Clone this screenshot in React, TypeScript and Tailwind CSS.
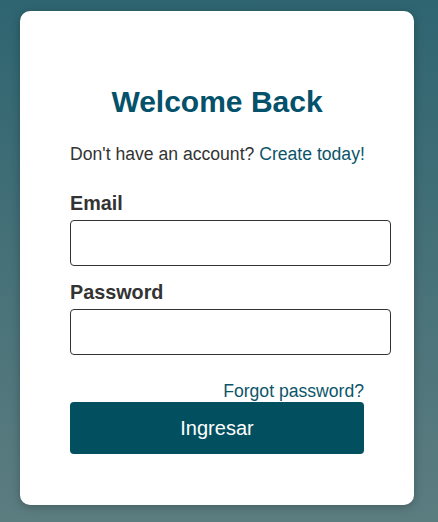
import React from "react";

export default function App() {
  return (
    <div
      className="min-h-[522px] w-full bg-gradient-to-b from-[#2e6571] to-[#5c7d80] pt-[11px] pb-[17px]"
      style={{ fontFamily: '"Liberation Sans", Arial, sans-serif' }}
    >
      <div className="ml-[20px] w-[394px] rounded-[10px] bg-white px-[50px] pt-[73px] pb-[51px] shadow-[0_2px_10px_rgba(0,0,0,0.25)]">
        <h1 className="text-center text-[30px] leading-[36px] font-bold text-[#03516a]">
          Welcome Back
        </h1>
        <p className="mt-[23.5px] text-[17.6px] leading-[20px] text-[#333333] whitespace-nowrap">
          Don't have an account?{" "}
          <a className="text-[#0b5569]">Create today!</a>
        </p>
        <label className="mt-[28px] block text-[19.8px] leading-[22px] font-bold text-[#333333]">
          Email
        </label>
        <input
          type="email"
          className="mt-[6.5px] box-border block h-[46px] w-[321px] rounded-[4px] border border-[#333333] bg-white px-3 outline-none"
        />
        <label className="mt-[14.5px] block text-[19.8px] leading-[22px] font-bold text-[#333333]">
          Password
        </label>
        <input
          type="password"
          className="mt-[6.5px] box-border block h-[46px] w-[321px] rounded-[4px] border border-[#333333] bg-white px-3 outline-none"
        />
        <div className="mt-[26px] text-right text-[17.6px] leading-[20px] text-[#0b5569]">
          <a>Forgot password?</a>
        </div>
        <button className="mt-[1px] block h-[52px] w-full rounded-[4px] bg-[#02505f] text-[20px] text-white">
          Ingresar
        </button>
      </div>
    </div>
  );
}
